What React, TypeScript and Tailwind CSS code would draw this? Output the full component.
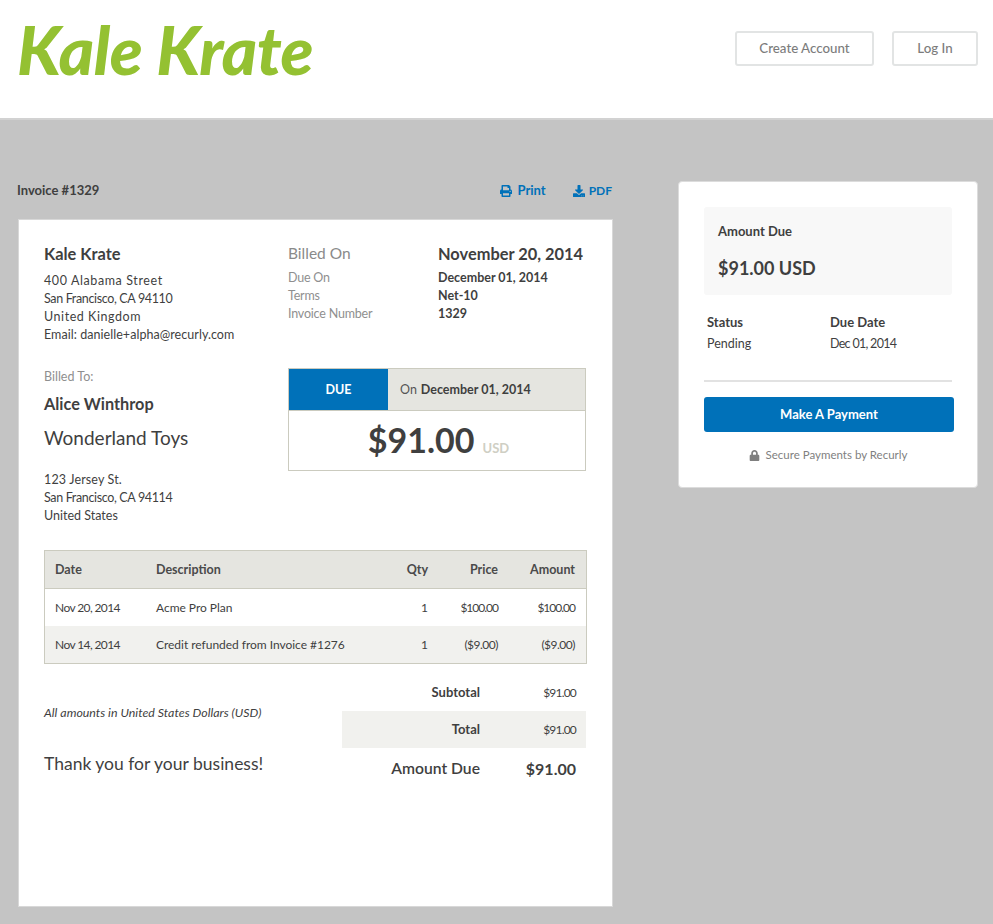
import React from "react";
import { FaPrint, FaDownload, FaLock } from "react-icons/fa";

const meta = [
  ["Due On", "December 01, 2014"],
  ["Terms", "Net-10"],
  ["Invoice Number", "1329"],
];

const rows = [
  { date: "Nov 20, 2014", desc: "Acme Pro Plan", qty: "1", price: "$100.00", amount: "$100.00", bg: "bg-white", num: "tracking-[-1px]" },
  { date: "Nov 14, 2014", desc: "Credit refunded from Invoice #1276", qty: "1", price: "($9.00)", amount: "($9.00)", bg: "bg-[#f1f1ee]", num: "tracking-[-0.5px]" },
];

export default function App() {
  return (
    <div className="min-h-[924px] bg-[#c4c4c4] font-['Lato','Liberation_Sans',sans-serif] text-[#3f3f3f] overflow-hidden">
      <header className="h-[120px] bg-white border-b-2 border-[#d2d2d2] flex justify-between pl-[17px] pr-[15px]">
        <div className="mt-[9px] h-[80px] text-[#94c132] text-[67.5px] leading-[80px] font-black italic tracking-[-0.5px]">Kale Krate</div>
        <div className="flex gap-[18px] mt-[31px]">
          <div className="w-[139px] h-[35px] border-2 border-[#e2e4e4] rounded-[3px] flex items-center justify-center text-[13.3px] font-medium text-[#7c7c7c]">Create Account</div>
          <div className="w-[86px] h-[35px] border-2 border-[#e2e4e4] rounded-[3px] flex items-center justify-center text-[13.3px] font-medium text-[#7c7c7c]">Log In</div>
        </div>
      </header>

      <main className="flex pl-[18px] pt-[61px] gap-[65px]">
        <section className="w-[595px]">
          <div className="h-[38px] pb-[19px] flex items-center justify-between">
            <span className="text-[13px] font-bold -ml-[1px]">Invoice #1329</span>
            <div className="flex gap-[27px] pr-[1px] text-[13px] font-bold text-[#0071b9]">
              <span className="flex items-center gap-[5px]"><FaPrint className="text-[12px]" />Print</span>
              <span className="flex items-center gap-[4px] text-[12px]"><FaDownload className="text-[12px]" />PDF</span>
            </div>
          </div>

          <div className="h-[688px] bg-white border border-[#d8d8d8] px-[25px] pt-[23px] text-[12.5px]">
            <div className="flex h-[125px]">
              <div className="w-[244px]">
                <div className="text-[16.4px] font-bold leading-[22px]">Kale Krate</div>
                <div className="mt-[7px] leading-[18px]">
                  <div className="tracking-[0.6px]">400 Alabama Street</div>
                  <div className="tracking-[-0.35px]">San Francisco, CA 94110</div>
                  <div className="tracking-[0.55px]">United Kingdom</div>
                  <div className="tracking-[0.05px]">Email: danielle+alpha@recurly.com</div>
                </div>
              </div>
              <div className="flex-1">
                <div className="flex items-center h-[22px]">
                  <span className="w-[150px] text-[15.5px] text-[#8a8a8a]">Billed On</span>
                  <span className="font-bold text-[16.4px]">November 20, 2014</span>
                </div>
                <div className="mt-[4px] leading-[18px]">
                  {meta.map(([k, v]) => (
                    <div key={k} className="flex">
                      <span className="w-[150px] text-[#8f8f8f] tracking-[-0.2px]">{k}</span>
                      <span className="font-bold">{v}</span>
                    </div>
                  ))}
                </div>
              </div>
            </div>

            <div className="flex h-[182px]">
              <div className="w-[244px]">
                <div className="text-[#8f8f8f] leading-[18px]">Billed To:</div>
                <div className="text-[16.3px] font-bold leading-[22px] mt-[7px]">Alice Winthrop</div>
                <div className="text-[19px] leading-[26px] mt-[10px]">Wonderland Toys</div>
                <div className="mt-[20px] leading-[18px]">
                  <div className="tracking-[0.15px]">123 Jersey St.</div>
                  <div className="tracking-[-0.35px]">San Francisco, CA 94114</div>
                  <div>United States</div>
                </div>
              </div>
              <div className="w-[298px] h-[103px] border border-[#cbcbbf]">
                <div className="flex h-[42px] border-b border-[#cbcbbf] bg-[#e5e5e0]">
                  <div className="w-[99px] bg-[#0071b9] text-white font-bold flex items-center justify-center pt-[1px]">DUE</div>
                  <div className="pl-[12px] pt-[1px] flex items-center gap-[4px]"><span className="text-[#555]">On</span><b>December 01, 2014</b></div>
                </div>
                <div className="flex items-baseline justify-center pt-[8px] pl-[3px]">
                  <span className="text-[34px] font-bold leading-[42px]">$91.00</span>
                  <span className="ml-[8px] text-[13px] font-bold text-[#cfcfc4]">USD</span>
                </div>
              </div>
            </div>

            <div className="w-[543px] border border-[#cbcbbf]">
              <div className="h-[38px] flex items-center bg-[#e5e5e0] border-b border-[#cbcbbf] font-bold text-[#4a4a4a] pl-[10px] pr-[11px] pt-[1px]">
                <span className="w-[101px]">Date</span>
                <span className="flex-1">Description</span>
                <span className="w-[40px] text-right">Qty</span>
                <span className="w-[70px] text-right">Price</span>
                <span className="w-[77px] text-right">Amount</span>
              </div>
              {rows.map((r) => (
                <div key={r.date} className={`flex items-center h-[37px] pl-[10px] pr-[11px] text-[12px] ${r.bg}`}>
                  <span className="w-[101px] tracking-[-0.6px]">{r.date}</span>
                  <span className="flex-1 tracking-[-0.03px]">{r.desc}</span>
                  <span className="w-[40px] text-right">{r.qty}</span>
                  <span className={`w-[70px] text-right ${r.num}`}>{r.price}</span>
                  <span className={`w-[77px] text-right ${r.num}`}>{r.amount}</span>
                </div>
              ))}
            </div>

            <div className="flex mt-[10px]">
              <div className="w-[298px]">
                <div className="mt-[30px] text-[12.4px] italic leading-[18px]">All amounts in United States Dollars (USD)</div>
                <div className="mt-[30px] text-[17.5px] leading-[24px]">Thank you for your business!</div>
              </div>
              <div className="w-[244px] text-[12px]">
                <div className="h-[37px] flex items-center">
                  <span className="w-[138px] text-right font-bold text-[13px]">Subtotal</span>
                  <span className="flex-1 text-right pr-[10px] tracking-[-0.8px]">$91.00</span>
                </div>
                <div className="h-[37px] flex items-center bg-[#f1f1ee]">
                  <span className="w-[138px] text-right font-bold text-[13px]">Total</span>
                  <span className="flex-1 text-right pr-[10px] tracking-[-0.8px]">$91.00</span>
                </div>
                <div className="h-[42px] flex items-center">
                  <span className="w-[138px] text-right text-[15.7px] font-semibold">Amount Due</span>
                  <span className="flex-1 text-right pr-[10px] text-[16px] font-bold">$91.00</span>
                </div>
              </div>
            </div>
          </div>
        </section>

        <aside className="w-[300px] h-[307px] bg-white border border-[#dcdcdc] rounded-[4px] px-[25px] pt-[25px] text-[12.5px]">
          <div className="w-[248px] h-[88px] bg-[#f8f8f8] rounded-[3px] px-[14px] pt-[15px]">
            <div className="text-[13px] font-bold leading-[18px]">Amount Due</div>
            <div className="text-[18px] font-bold leading-[24px] mt-[16px]">$91.00 USD</div>
          </div>
          <div className="flex mt-[18px] px-[3px] w-[248px]">
            <div className="w-[123px]">
              <div className="text-[13px] font-bold leading-[18px]">Status</div>
              <div className="mt-[4px] leading-[18px]">Pending</div>
            </div>
            <div>
              <div className="text-[13px] font-bold leading-[18px]">Due Date</div>
              <div className="mt-[4px] leading-[18px] tracking-[-0.7px]">Dec 01, 2014</div>
            </div>
          </div>
          <div className="w-[248px] h-[2px] bg-[#e2e2e2] mt-[27px]" />
          <div className="w-[250px] h-[35px] mt-[15px] bg-[#0071b9] rounded-[3px] text-white font-bold text-[13px] flex items-center justify-center">Make A Payment</div>
          <div className="w-[250px] mt-[14px] flex items-center justify-center gap-[6px] text-[#7f7f7f] text-[11.5px] leading-[18px] -ml-[1px]">
            <FaLock className="text-[11px]" />Secure Payments by Recurly
          </div>
        </aside>
      </main>
    </div>
  );
}
